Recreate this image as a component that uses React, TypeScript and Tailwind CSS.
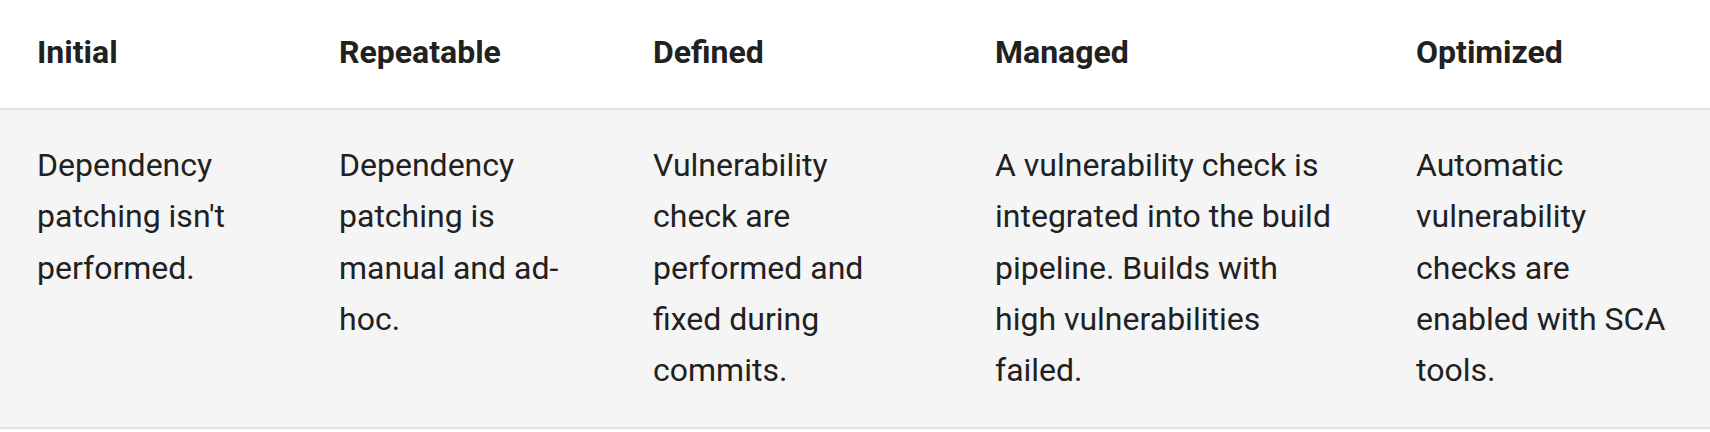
import React from "react";

const headers = ["Initial", "Repeatable", "Defined", "Managed", "Optimized"];
const cells = [
  "Dependency patching isn't performed.",
  "Dependency patching is manual and ad-hoc.",
  "Vulnerability check are performed and fixed during commits.",
  "A vulnerability check is integrated into the build pipeline. Builds with high vulnerabilities failed.",
  "Automatic vulnerability checks are enabled with SCA tools.",
];
const widths = ["max-w-[246px]", "max-w-[240px]", "max-w-[234px]", "max-w-[336px]", "max-w-[259px]"];

export default function App() {
  return (
    <div
      className="w-[1710px] h-[432px] bg-white text-[#212121] text-[32px] leading-[51.2px]"
      style={{ fontFamily: "Roboto, 'Noto Sans', sans-serif" }}
    >
      <div className="grid grid-cols-[302px_314px_342px_421px_1fr] pl-[37px] pt-[27px] pb-[30px] border-b-2 border-[#e0e0e0] bg-white">
        {headers.map((h) => (
          <div key={h} className="font-bold">
            {h}
          </div>
        ))}
      </div>
      <div className="grid grid-cols-[302px_314px_342px_421px_1fr] pl-[37px] pt-[30px] pb-[31px] border-b-2 border-[#e0e0e0] bg-[#f5f5f5]">
        {cells.map((c, i) => (
          <div key={i} className={widths[i]}>
            {c}
          </div>
        ))}
      </div>
    </div>
  );
}
